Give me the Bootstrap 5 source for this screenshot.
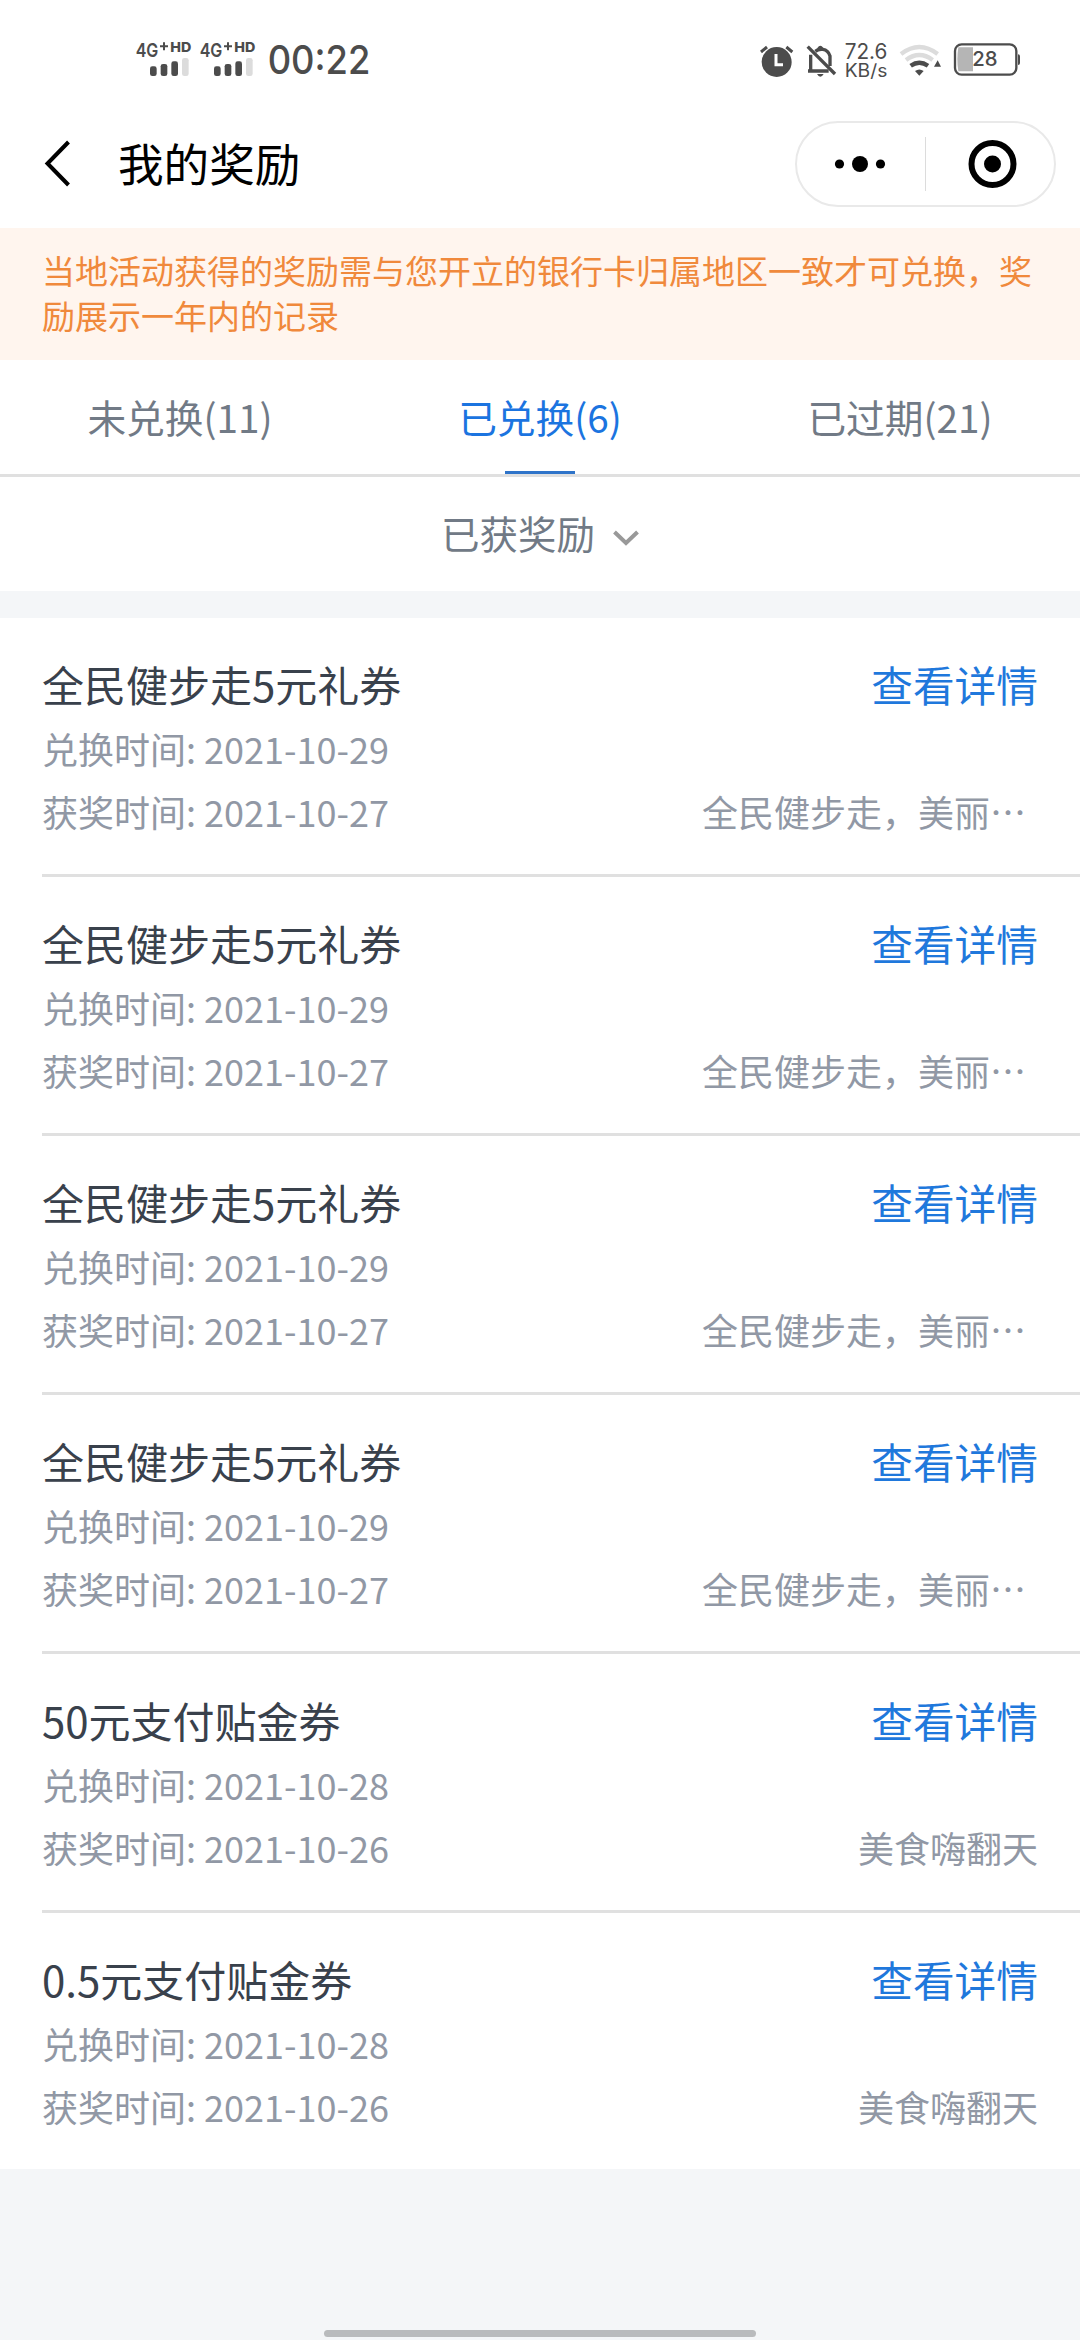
<!DOCTYPE html>
<html lang="zh-CN">
<head>
<meta charset="utf-8">
<meta name="viewport" content="width=device-width, initial-scale=1">
<title>我的奖励</title>
<link href="https://cdn.jsdelivr.net/npm/bootstrap@5.3.0/dist/css/bootstrap.min.css" rel="stylesheet">
<style>
  body { font-family: "Noto Sans CJK SC", sans-serif; background: #f4f6f8; width: 1080px; height: 2340px; overflow: hidden; }
  svg { display: block; flex: none; }
  svg text { font-family: Inter, "Noto Sans", sans-serif; }
  .status-bar { height: 100px; padding: 20px 40px 0 110px; }
  .title-bar { height: 128px; padding: 0 24px 0 42px; }
  .title-bar h1 { font-size: 45.6px; line-height: 66px; font-weight: 400; color: #000; margin-left: 45px; padding-bottom: 5px; }
  .capsule { width: 261px; height: 86px; border: 2px solid #e9e9e9; border-radius: 43px; margin-top: -0.5px; }
  .capsule-rule { width: 1px; height: 54px; background: #dcdcdc; }
  .notice { height: 132px; padding: 20px 42px; background: #fff5ee; color: #f0893c; font-size: 33px; line-height: 45px; }
  .reward-tabs { height: 117px; border-bottom: 3px solid #e0e0e0; }
  .reward-tabs .nav-link { height: 114px; padding: 0; color: #717a86; font-size: 38.7px; line-height: 113px; position: relative; }
  .reward-tabs .nav-link.active { color: #1b74e0; }
  .reward-tabs .nav-link.active::after { content: ""; position: absolute; left: 50%; bottom: 0; width: 70px; height: 3px; margin-left: -35px; background: #2f74c9; }
  .filter-bar { height: 114px; color: #717a86; font-size: 38.5px; line-height: 110px; gap: 18px; }
  .filter-bar span { height: 114px; }
  .reward-list { margin-top: 27px; }
  .reward-item { height: 259px; padding: 35px 42px 0 0; margin-left: 42px; border-bottom: 3px solid #e0e0e0; color: #9198a5; font-size: 36px; line-height: 63px; }
  .reward-item:last-child { border-bottom: 0; height: 256px; }
  .reward-head { height: 64px; }
  .reward-name { font-size: 42px; line-height: 62px; color: #39414c; }
  .reward-link { font-size: 41.7px; line-height: 62px; color: #1f78dc; text-decoration: none; }
  .home-handle { width: 432px; height: 7px; border-radius: 4px; background: #b9bbbd; margin-top: 161px; }
</style>
</head>
<body>
<header class="bg-white">
  <div class="status-bar d-flex justify-content-between">
    <svg width="300" height="80" viewBox="0 0 900 240" fill="#4c4c4c">
      <g id="sim">
        <text x="77" y="110" font-size="58" font-weight="600" textLength="68" lengthAdjust="spacingAndGlyphs">4G</text>
        <path d="M150 79h24M162 67v24" stroke="#4c4c4c" stroke-width="6"/>
        <text x="181" y="96" font-size="40" font-weight="800" textLength="63" lengthAdjust="spacingAndGlyphs">HD</text>
        <rect x="120" y="139" width="20" height="29" rx="7"/>
        <rect x="152" y="132" width="20" height="36" rx="7"/>
        <rect x="184" y="124" width="20" height="44" rx="7"/>
        <rect x="216" y="114" width="20" height="54" rx="7" fill="#dcdcdc"/>
      </g>
      <use href="#sim" x="192"/>
      <text x="473" y="161" font-size="118" font-weight="500" textLength="308" lengthAdjust="spacingAndGlyphs">00:22</text>
    </svg>
    <svg width="300" height="80" viewBox="0 0 900 240" fill="#4c4c4c">
      <circle cx="110" cy="126" r="45"/>
      <path d="M63 96l18-15M157 96l-18-15" stroke="#4c4c4c" stroke-width="9"/>
      <path d="M108 102v32h21" fill="none" stroke="#fff" stroke-width="9"/>
      <path d="M212 104v46M204 153h62M226 94C236 86 262 82 270 108V138" fill="none" stroke="#4c4c4c" stroke-width="10"/>
      <path d="M232 84q9-13 18 0zM231 162h20q-10 17-20 0z"/>
      <path d="M203 80l82 82" stroke="#4c4c4c" stroke-width="10"/>
      <text x="314" y="116" font-size="64" textLength="128" lengthAdjust="spacingAndGlyphs">72.6</text>
      <text x="314" y="170" font-size="54" textLength="128" lengthAdjust="spacingAndGlyphs">KB/s</text>
      <g fill="none" stroke-width="13">
        <path d="M483 102Q538 60 593 102" stroke="#dcdcdc"/>
        <path d="M498 120Q538 90 578 120" stroke="#dcdcdc"/>
        <path d="M512 137Q538 119 564 137" stroke="#4c4c4c"/>
      </g>
      <path d="M525 153q13-9 26 0l-13 14zM582 140l11-19 10 19z"/>
      <path d="M655 82h44v72h-44q-6-36 0-72z" fill="#b5b5b5"/>
      <rect x="645" y="73" width="184" height="91" rx="20" fill="none" stroke="#4c4c4c" stroke-width="7"/>
      <path d="M834 103q6 0 6 6v20q0 6-6 6z"/>
      <text x="697" y="139" font-size="62" font-weight="500" textLength="76" lengthAdjust="spacingAndGlyphs">28</text>
    </svg>
  </div>
  <div class="title-bar d-flex align-items-center">
    <svg width="31" height="50" viewBox="0 0 31 50" fill="none" stroke="#000" stroke-width="4"><path d="M26.500 3L5.500 24.500L26.500 46"/></svg>
    <h1 class="mb-0">我的奖励</h1>
    <div class="capsule ms-auto d-flex align-items-center">
      <svg width="128" height="54" viewBox="0 0 128 54"><circle cx="42.500" cy="27" r="4.600"/><circle cx="63" cy="27" r="8"/><circle cx="83.500" cy="27" r="4.600"/></svg>
      <div class="capsule-rule"></div>
      <svg width="126" height="54" viewBox="0 0 126 54"><circle cx="66.500" cy="27" r="21" fill="none" stroke="#000" stroke-width="6"/><circle cx="66.500" cy="27" r="8.500"/></svg>
    </div>
  </div>
</header>

<div class="notice">当地活动获得的奖励需与您开立的银行卡归属地区一致才可兑换，奖励展示一年内的记录</div>

<nav class="reward-tabs nav nav-justified bg-white">
  <a class="nav-link" href="#">未兑换(11)</a>
  <a class="nav-link active" href="#">已兑换(6)</a>
  <a class="nav-link" href="#">已过期(21)</a>
</nav>
<div class="filter-bar bg-white d-flex justify-content-center align-items-center">
  <span>已获奖励</span>
  <svg width="26" height="16" viewBox="0 0 26 16" fill="none" stroke="#999" stroke-width="4" class="mt-2"><path d="M1.500 2L13 13L24.500 2"/></svg>
</div>

<main class="reward-list bg-white">
  <div class="reward-item">
    <div class="reward-head d-flex justify-content-between"><span class="reward-name">全民健步走5元礼券</span><a class="reward-link" href="#">查看详情</a></div>
    <div>兑换时间: 2021-10-29</div>
    <div class="d-flex justify-content-between"><span>获奖时间: 2021-10-27</span><span class="pe-2 me-1">全民健步走，美丽…</span></div>
  </div>
  <div class="reward-item">
    <div class="reward-head d-flex justify-content-between"><span class="reward-name">全民健步走5元礼券</span><a class="reward-link" href="#">查看详情</a></div>
    <div>兑换时间: 2021-10-29</div>
    <div class="d-flex justify-content-between"><span>获奖时间: 2021-10-27</span><span class="pe-2 me-1">全民健步走，美丽…</span></div>
  </div>
  <div class="reward-item">
    <div class="reward-head d-flex justify-content-between"><span class="reward-name">全民健步走5元礼券</span><a class="reward-link" href="#">查看详情</a></div>
    <div>兑换时间: 2021-10-29</div>
    <div class="d-flex justify-content-between"><span>获奖时间: 2021-10-27</span><span class="pe-2 me-1">全民健步走，美丽…</span></div>
  </div>
  <div class="reward-item">
    <div class="reward-head d-flex justify-content-between"><span class="reward-name">全民健步走5元礼券</span><a class="reward-link" href="#">查看详情</a></div>
    <div>兑换时间: 2021-10-29</div>
    <div class="d-flex justify-content-between"><span>获奖时间: 2021-10-27</span><span class="pe-2 me-1">全民健步走，美丽…</span></div>
  </div>
  <div class="reward-item">
    <div class="reward-head d-flex justify-content-between"><span class="reward-name">50元支付贴金券</span><a class="reward-link" href="#">查看详情</a></div>
    <div>兑换时间: 2021-10-28</div>
    <div class="d-flex justify-content-between"><span>获奖时间: 2021-10-26</span><span>美食嗨翻天</span></div>
  </div>
  <div class="reward-item">
    <div class="reward-head d-flex justify-content-between"><span class="reward-name">0.5元支付贴金券</span><a class="reward-link" href="#">查看详情</a></div>
    <div>兑换时间: 2021-10-28</div>
    <div class="d-flex justify-content-between"><span>获奖时间: 2021-10-26</span><span>美食嗨翻天</span></div>
  </div>
</main>
<div class="home-handle mx-auto"></div>
<script src="https://cdn.jsdelivr.net/npm/bootstrap@5.3.0/dist/js/bootstrap.bundle.min.js"></script>
</body>
</html>
